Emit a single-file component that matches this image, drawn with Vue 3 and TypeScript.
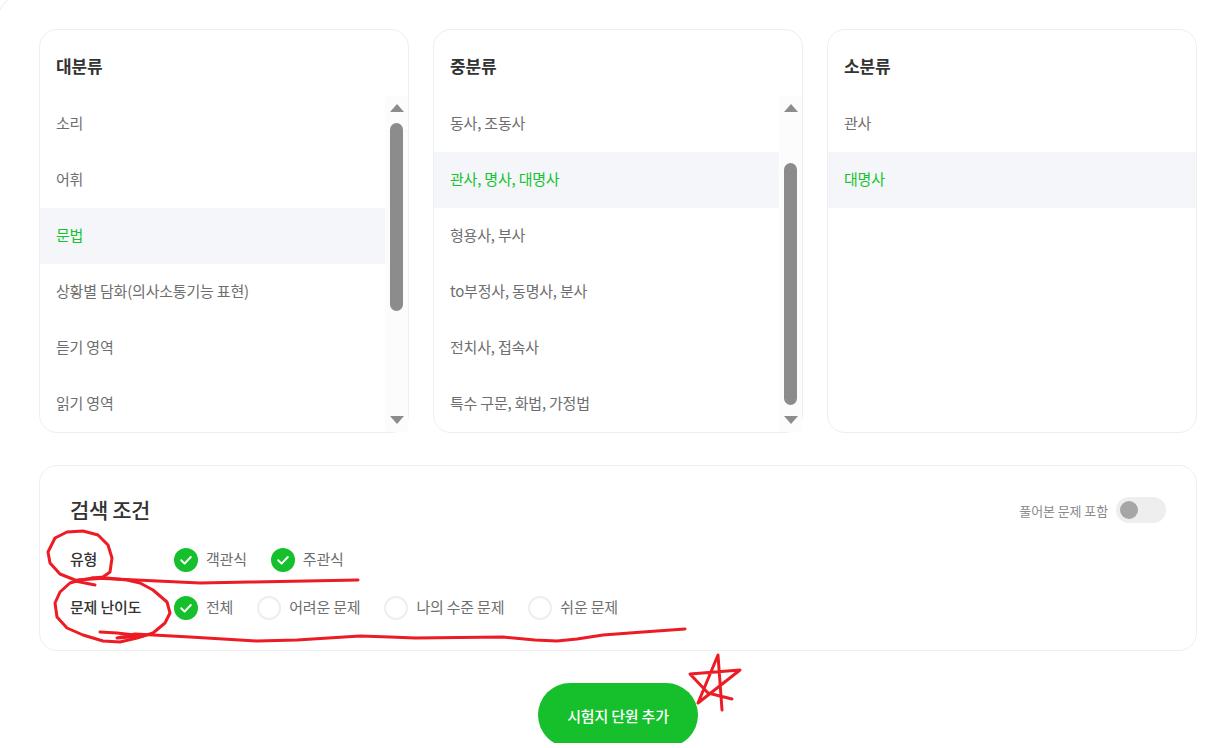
<script setup lang="ts">
interface Col { title: string; items: string[]; active: number; thumb?: { top: number; height: number } }
const cols: Col[] = [
  { title: '대분류', items: ['소리', '어휘', '문법', '상황별 담화(의사소통기능 표현)', '듣기 영역', '읽기 영역'], active: 2, thumb: { top: 11, height: 188 } },
  { title: '중분류', items: ['동사, 조동사', '관사, 명사, 대명사', '형용사, 부사', 'to부정사, 동명사, 분사', '전치사, 접속사', '특수 구문, 화법, 가정법'], active: 1, thumb: { top: 51, height: 242 } },
  { title: '소분류', items: ['관사', '대명사'], active: 1 },
]
const filters = [
  { label: '유형', options: [{ t: '객관식', on: true }, { t: '주관식', on: true }] },
  { label: '문제 난이도', options: [{ t: '전체', on: true }, { t: '어려운 문제', on: false }, { t: '나의 수준 문제', on: false }, { t: '쉬운 문제', on: false }] },
]
const strokes: string[] = [
  'M75 580 L60 574 L50 563 L48 552 L55 538 L67 532 L83 531 L98 535 L108 545 L112 558 L110 572 L103 577 L93 578 L75 581 L95 585',
  'M92 578 L115 579 L200 583 L250 582 L358 580',
  'M77 580 L107 578 L127 580 L140 583 L153 590 L167 602 L170 613 L165 623 L153 633 L137 638 L120 642 L103 641 L83 635 L67 628 L57 617 L55 603 L60 592 L70 583 L80 580',
  'M100 632 L117 633 L143 636 L117 638 L135 634 L190 637 L257 641 L297 640 L360 636 L390 637 L415 638 L503 637 L535 640 L557 641 L577 639 L603 635 L643 632 L685 629',
  'M722 710 L718 655 L698 703 L740 670 L690 674 L708 693 L732 699',
]
</script>

<template>
  <div class="page">
    <section class="cols">
      <article v-for="c in cols" :key="c.title" class="card">
        <h3 class="card-title">{{ c.title }}</h3>
        <div class="list-wrap">
          <ul class="list">
            <li v-for="(it, i) in c.items" :key="it" class="item" :class="{ active: i === c.active }">{{ it }}</li>
          </ul>
          <div v-if="c.thumb" class="bar">
            <span class="arrow up"></span>
            <span class="thumb" :style="{ marginTop: c.thumb.top + 'px', height: c.thumb.height + 'px' }"></span>
            <span class="arrow down"></span>
          </div>
        </div>
      </article>
    </section>

    <section class="search">
      <div class="search-head">
        <h2 class="search-title">검색 조건</h2>
        <div class="toggle-wrap">
          <span class="toggle-label">풀어본 문제 포함</span>
          <span class="toggle"><span class="knob"></span></span>
        </div>
      </div>
      <div v-for="f in filters" :key="f.label" class="row">
        <span class="row-label">{{ f.label }}</span>
        <div class="options">
          <label v-for="o in f.options" :key="o.t" class="opt">
            <span class="check" :class="{ on: o.on }">
              <svg v-if="o.on" width="24" height="24" viewBox="0 0 24 24" fill="none">
                <path d="M7.2 12.3 L10.6 15.6 L16.8 9" stroke="#fff" stroke-width="2" stroke-linecap="round" stroke-linejoin="round" />
              </svg>
            </span>
            <span class="opt-text">{{ o.t }}</span>
          </label>
        </div>
      </div>
    </section>

    <div class="actions">
      <button class="add" type="button">시험지 단원 추가</button>
    </div>

    <svg class="ink" width="1228" height="748" viewBox="0 0 1228 748" fill="none">
      <path v-for="(d, i) in strokes" :key="i" :d="d" stroke="#ed1c24" stroke-width="3" stroke-linecap="round" stroke-linejoin="round" />
    </svg>
  </div>
</template>

<style scoped>
.page {
  position: relative;
  box-sizing: border-box;
  height: 743px;
  overflow: hidden;
  padding: 29px 31px 0 39px;
  background: #fff;
  font-family: "Noto Sans CJK KR", "Noto Sans", sans-serif;
  letter-spacing: -0.2px;
  color: #666;
}
.page::before {
  content: "";
  position: absolute;
  left: -2px;
  top: -3px;
  width: 60px;
  height: 60px;
  border-left: 1px solid #eee;
  border-top: 1px solid #eee;
  border-top-left-radius: 20px;
}
.cols {
  display: grid;
  grid-template-columns: repeat(3, 370px);
  gap: 24px;
}
.card {
  box-sizing: border-box;
  height: 404px;
  border: 1px solid #eceef0;
  border-radius: 18px;
  background: #fff;
  position: relative;
}
.card-title {
  margin: 0;
  height: 66px;
  padding: 24px 16px 0;
  box-sizing: border-box;
  font-size: 17px;
  line-height: 24px;
  font-weight: 700;
  color: #333;
}
.list-wrap {
  display: flex;
  height: 336px;
}
.list {
  flex: 1;
  min-width: 0;
  list-style: none;
  margin: 0;
  padding: 0;
}
.item {
  height: 56px;
  padding: 0 16px;
  font-size: 15px;
  line-height: 54px;
  color: #6e6e6e;
}
.item.active {
  background: #f5f6fa;
  color: #14c32e;
}
.bar {
  width: 23px;
  flex: none;
  display: flex;
  flex-direction: column;
  align-items: center;
  background: #fcfcfc;
}
.arrow {
  width: 0;
  height: 0;
  border-left: 7.5px solid transparent;
  border-right: 7.5px solid transparent;
}
.arrow.up {
  margin-top: 8px;
  border-bottom: 8px solid #8c8c8c;
}
.arrow.down {
  margin-top: auto;
  margin-bottom: 8px;
  border-top: 8px solid #8c8c8c;
}
.thumb {
  width: 13px;
  border-radius: 7px;
  background: #8c8c8c;
}
.search {
  box-sizing: border-box;
  height: 186px;
  margin-top: 32px;
  padding: 27px 30px 0 30px;
  border: 1px solid #eceef0;
  border-radius: 18px;
  background: #fff;
}
.search-head {
  display: flex;
  align-items: center;
  justify-content: space-between;
  height: 34px;
  margin-bottom: 9px;
}
.search-title {
  margin: 0;
  padding-bottom: 2px;
  font-size: 21px;
  line-height: 32px;
  font-weight: 500;
  letter-spacing: -0.4px;
  color: #333;
}
.toggle-wrap {
  display: flex;
  align-items: center;
  gap: 8px;
}
.toggle-label {
  font-size: 13px;
  letter-spacing: -0.1px;
  color: #8a8a8a;
}
.toggle {
  display: flex;
  align-items: center;
  width: 50px;
  height: 26px;
  padding-left: 4px;
  box-sizing: border-box;
  border-radius: 13px;
  background: #eeeeee;
}
.knob {
  width: 18px;
  height: 18px;
  border-radius: 50%;
  background: #a6a6a6;
}
.row {
  display: flex;
  align-items: center;
  height: 48px;
}
.row-label {
  width: 104px;
  flex: none;
  padding-bottom: 3px;
  font-size: 15px;
  font-weight: 500;
  color: #333;
}
.options {
  display: flex;
  gap: 24px;
}
.opt {
  display: flex;
  align-items: center;
  gap: 8px;
  font-size: 15px;
  color: #6e6e6e;
}
.opt-text {
  padding-bottom: 3px;
}
.check {
  box-sizing: border-box;
  width: 24px;
  height: 24px;
  border: 2px solid #eeeeee;
  border-radius: 50%;
  background: #fff;
}
.check.on {
  border: 0;
  background: #16bf2c;
}
.check svg {
  display: block;
}
.actions {
  display: flex;
  justify-content: center;
  margin-top: 32px;
}
.add {
  width: 160px;
  height: 64px;
  flex: none;
  border: 0;
  border-radius: 32px;
  background: #16bf2c;
  color: #fff;
  font-family: inherit;
  font-size: 15px;
  font-weight: 500;
  letter-spacing: -0.2px;
}
.ink {
  position: absolute;
  left: 0;
  top: 0;
  pointer-events: none;
}
</style>
